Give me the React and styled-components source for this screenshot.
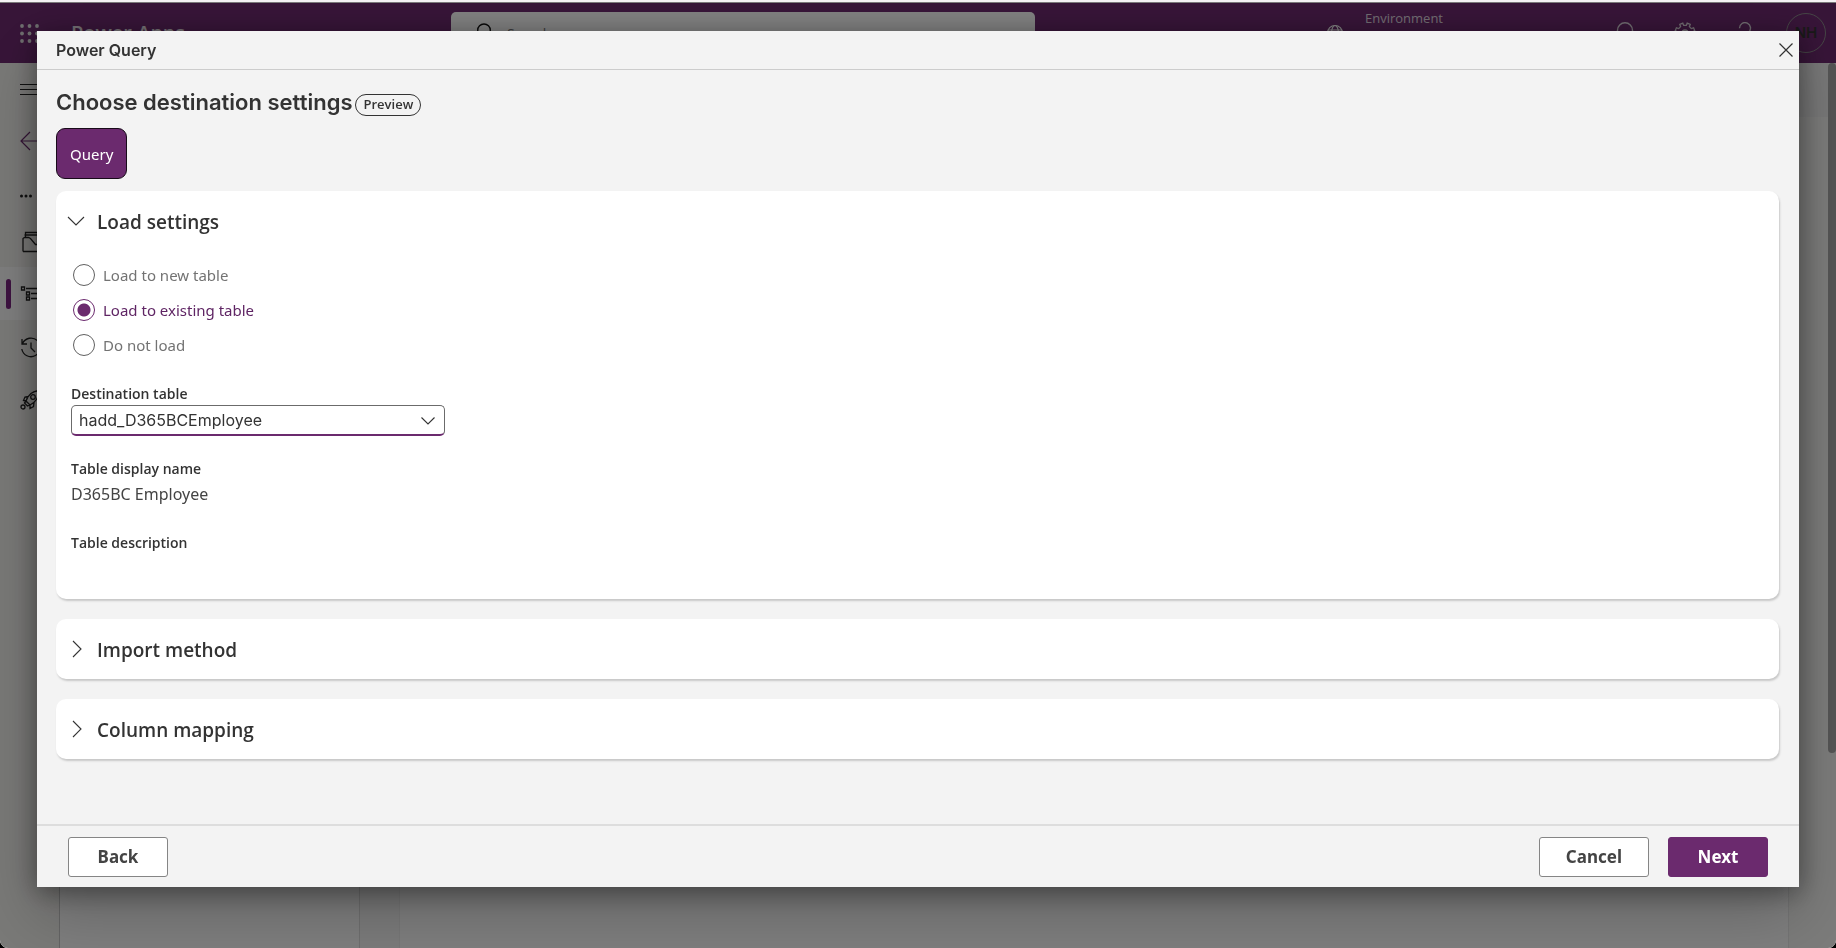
import React, { useState } from "react";
import styled, { createGlobalStyle, css } from "styled-components";

const ui = '"Open Sans", "Noto Sans", sans-serif';
const reading = '"Noto Sans", "Open Sans", sans-serif';
const system = 'Inter, "Liberation Sans", sans-serif';
const purple = "#6b2a6e";

const GlobalStyle = createGlobalStyle`
  *, *::before, *::after { box-sizing: border-box; }
  html, body { margin: 0; height: 100%; background: #000; }
  body { font-family: ${ui}; color: #333; overflow: hidden; }
  button, input, select { font: inherit; color: inherit; margin: 0; }
`;

/* ---------- application shell behind the dialog ---------- */

const Shell = styled.div`
  min-height: 100vh;
  display: flex;
  flex-direction: column;
  background: #fff;
  border-top: 3px solid #f5f2f5;
  border-radius: 0 0 8px 8px;
  overflow: hidden;
`;

const TopBar = styled.header`
  height: 60px;
  flex: none;
  display: grid;
  grid-template-columns: 451fr 584fr 801fr;
  align-items: center;
  background: #6e2a70;
  color: #fff;
`;

const BrandArea = styled.div`
  display: flex;
  align-items: center;
  gap: 32px;
  padding-left: 20px;
`;

const Brand = styled.span`
  font: 600 20px/24px ${ui};
  color: #e8e0e8;
  white-space: nowrap;
`;

const SearchBox = styled.label`
  height: 42px;
  display: flex;
  align-items: center;
  gap: 15px;
  padding: 0 21px;
  border-radius: 5px;
  background: #fff;
  color: #111;
`;

const SearchInput = styled.input`
  flex: 1;
  min-width: 0;
  padding: 0;
  border: 0;
  outline: 0;
  background: transparent;
  font-size: 14px;
  &::placeholder { color: #777; opacity: 1; }
`;

const TopTools = styled.div`
  display: flex;
  align-items: center;
  justify-content: flex-end;
  padding-right: 10px;
`;

const ToolGroup = styled.div`
  display: flex;
  gap: 36px;
  margin-right: 29px;
`;

const EnvironmentArea = styled.div`
  display: flex;
  align-items: center;
  gap: 21px;
  height: 60px;
  margin-right: 170px;
`;

const EnvironmentLabel = styled.span`
  align-self: flex-start;
  padding-top: 5px;
  font-size: 13px;
  line-height: 20px;
  color: #e0d8e0;
`;

const ToolButton = styled.button`
  width: 24px;
  height: 24px;
  padding: 0;
  border: 0;
  background: none;
  color: #e0d8e0;
  display: grid;
  place-items: center;
`;

const Avatar = styled.span`
  width: 40px;
  height: 40px;
  flex: none;
  display: grid;
  place-items: center;
  border: 1px solid #8a8a8a;
  border-radius: 50%;
  font: 600 15px/20px ${system};
  color: #333;
`;

const Workspace = styled.div`
  flex: 1;
  display: flex;
`;

const NavRail = styled.nav`
  width: 60px;
  flex: none;
  display: flex;
  flex-direction: column;
  background: #f3f2ef;
  border-right: 1px solid #c8c8c8;
`;

const NavItem = styled.a`
  height: ${(p) => (p.$compact ? 49 : 53)}px;
  padding-left: 20px;
  display: flex;
  align-items: center;
  color: ${(p) => (p.$accent ? purple : "#222")};
  ${(p) =>
    p.$selected &&
    css`
      padding-left: 6px;
      gap: 9px;
      background: #fcfcfc;
      &::before {
        content: "";
        width: 5px;
        height: 30px;
        border-radius: 3px;
        background: #7a2580;
      }
    `}
`;

const ListPane = styled.div`
  width: 300px;
  border-right: 1px solid #ddd;
  background: #fdfdfd;
`;

const Gutter = styled.div`
  width: 40px;
  background: #f6f6f6;
  border-right: 1px solid #eee;
`;

const Canvas = styled.div`
  flex: 1;
  background: #fcfcfc;
  border-right: 1px solid #e8e8e8;
`;

const SidePane = styled.div`
  width: 39px;
  background: #f6f6f4;
`;

const CommandStrip = styled.div`
  height: 54px;
  background: #efefef;
`;

const ScrollTrack = styled.div`
  width: 8px;
  background: #f6f6f4;
`;

const ScrollThumb = styled.div`
  height: 78%;
  border-radius: 4px;
  background: #a8a8a8;
`;

/* ---------- dialog ---------- */

const Overlay = styled.div`
  position: fixed;
  inset: 2px 0 0;
  display: flex;
  padding: 29px 37px 61px;
  background: rgba(0, 0, 0, 0.5);
  border-radius: 0 0 8px 8px;
`;

const Dialog = styled.section`
  flex: 1;
  min-width: 0;
  display: flex;
  flex-direction: column;
  background: #f3f3f3;
  box-shadow: 0 26px 58px rgba(0, 0, 0, 0.22), 0 5px 24px rgba(0, 0, 0, 0.4);
`;

const DialogHeader = styled.header`
  flex: none;
  height: 39px;
  display: flex;
  align-items: center;
  justify-content: space-between;
  padding: 0 4px 0 19px;
  border-bottom: 1px solid #ccc;
`;

const DialogName = styled.span`
  font: 600 16px/20px ${system};
`;

const CloseButton = styled.button`
  width: 18px;
  height: 24px;
  padding: 0;
  border: 0;
  background: none;
  display: grid;
  place-items: center;
`;

const DialogBody = styled.div`
  flex: 1;
  min-height: 0;
  overflow: auto;
  padding: 16px 20px 16px 19px;
`;

const TitleRow = styled.div`
  display: flex;
  align-items: center;
  gap: 3px;
`;

const Title = styled.h1`
  margin: 0;
  font: 600 22px/32px ${system};
`;

const Badge = styled.span`
  height: 22px;
  margin-top: 6px;
  padding: 0 7px;
  border: 1px solid #333;
  border-radius: 11px;
  font-size: 13px;
  font-weight: 600;
  line-height: 19px;
`;

const QueryTab = styled.button`
  display: block;
  height: 51px;
  margin: 10px 0 12px;
  padding: 0 13px;
  border: 1px solid #180a19;
  border-radius: 9px;
  background: ${purple};
  color: #fff;
  font: 400 15px/20px ${reading};
`;

const CardList = styled.div`
  display: flex;
  flex-direction: column;
  gap: 20px;
`;

const Card = styled.section`
  border-radius: 10px;
  background: #fff;
  box-shadow: 1px 2px 2px #c8c8c8;
`;

const CardToggle = styled.button`
  width: 100%;
  height: 60px;
  display: flex;
  align-items: center;
  gap: 12px;
  padding: 0 11px;
  border: 0;
  background: none;
  text-align: left;
`;

const CardTitle = styled.span`
  padding-top: 2px;
  font-size: 19px;
  font-weight: 600;
  line-height: 26px;
`;

const CardContent = styled.div`
  padding: 6px 15px 18px;
`;

const Options = styled.fieldset`
  margin: 0;
  padding: 0 2px;
  border: 0;
`;

const Option = styled.label`
  display: flex;
  align-items: center;
  gap: 8px;
  height: 35px;
  font: 400 15px/20px ${reading};
  color: ${(p) => (p.$checked ? "#5f2564" : "#737373")};
`;

const Radio = styled.input`
  appearance: none;
  width: 22px;
  height: 22px;
  border: 1px solid #606060;
  border-radius: 50%;
  background: #fff;
  &:checked {
    border-color: ${purple};
    background: radial-gradient(circle, ${purple} 6px, #fff 7px);
  }
`;

const Field = styled.div`
  margin-top: ${(p) => p.$gap}px;
`;

const FieldLabel = styled.label`
  display: block;
  font-size: 14px;
  font-weight: 600;
  line-height: 20px;
`;

const SelectFrame = styled.div`
  width: 374px;
  max-width: 100%;
  margin-top: 1px;
  display: grid;
  align-items: center;
  > * { grid-area: 1 / 1; }
  > svg { justify-self: end; margin-right: 10px; pointer-events: none; }
`;

const Select = styled.select`
  appearance: none;
  width: 100%;
  height: 31px;
  padding: 0 32px 0 7px;
  border: 1px solid #6b6b6b;
  border-bottom: 2px solid ${purple};
  border-radius: 5px;
  background: #fff;
  font: 400 16px/20px ${system};
`;

const FieldValue = styled.div`
  min-height: 24px;
  margin-top: 4px;
  font: 400 16px/22px ${reading};
  color: #444;
`;

const DialogFooter = styled.footer`
  flex: none;
  height: 63px;
  display: flex;
  align-items: center;
  gap: 19px;
  padding: 0 31px;
  border-top: 2px solid #ddd;
`;

const Spacer = styled.div`
  flex: 1;
`;

const FooterButton = styled.button`
  height: 40px;
  min-width: 100px;
  padding: 0 26px;
  border: 1px solid ${(p) => (p.$primary ? purple : "#858585")};
  border-radius: 3px;
  background: ${(p) => (p.$primary ? purple : "#fff")};
  color: ${(p) => (p.$primary ? "#fff" : "#444")};
  font: 700 17px/24px ${reading};
`;

/* ---------- icons ---------- */

const Line = ({ w = 20, h = 20, width = 1, children }) => (
  <svg width={w} height={h} viewBox={`0 0 ${w} ${h}`} fill="none" stroke="currentColor" strokeWidth={width} aria-hidden="true">
    {children}
  </svg>
);

const Waffle = () => (
  <svg width="19" height="19" viewBox="0 0 19 19" fill="#ddd" aria-hidden="true">
    {[2, 9.5, 17].map((y) => [2, 9.5, 17].map((x) => <circle key={`${x}-${y}`} cx={x} cy={y} r="1.9" />))}
  </svg>
);
const Chevron = ({ open }) => (
  <Line w={18} h={18} width={1.1}>
    <path d={open ? "M1 5l8 8 8-8" : "M6 1l8 8-8 8"} />
  </Line>
);
const SelectChevron = () => (
  <Line w={14} h={10} width={1.1}><path d="M0.5 1.5L7 8l6.5-6.5" /></Line>
);
const Cross = () => (
  <Line w={14} h={14} width={1.2}><path d="M0.5 0.5l13 13M13.5 0.5l-13 13" /></Line>
);
const Magnifier = () => (
  <Line width={1.4}><circle cx="12" cy="7.3" r="6.3" /><path d="M7.5 12L1 18.5" /></Line>
);
const Globe = () => (
  <Line w={18} h={18} width={1.2}>
    <circle cx="9" cy="9" r="7.5" /><ellipse cx="9" cy="9" rx="3.5" ry="7.5" /><path d="M2 6h14M2 12h14" />
  </Line>
);
const Bell = () => (
  <Line w={22} h={22} width={1.4}><path d="M3.5 16V8.3a7.5 7.5 0 0 1 15 0V16l1 2h-17zM9 18a2 2 0 0 0 4 0" /></Line>
);
const Gear = () => (
  <Line w={22} h={22} width={1.3}>
    <circle cx="11" cy="11" r="3" />
    <path d="M8.8 1.2l.9 2.2h2.6l.9-2.2 3 1.2-.8 2.3 1.9 1.9 2.3-.8 1.2 3-2.2.9v2.6l2.2.9-1.2 3-2.3-.8-1.9 1.9.8 2.3-3 1.2-.9-2.2H9.7l-.9 2.2-3-1.2.8-2.3-1.9-1.9-2.3.8-1.2-3 2.2-.9V9.700l-2.200-.9 1.200-3 2.300.8 1.900-1.900-.8-2.300z" />
  </Line>
);
const Question = () => (
  <Line w={22} h={22} width={1.4}><path d="M5.5 6.2a5.5 5.5 0 1 1 9 4.2c-2 1.6-3.5 2.3-3.5 4.6M11 18v2" /></Line>
);
const Menu = () => (
  <Line width={1.2}><path d="M0 4.5h20M0 9.5h20M0 14.5h20" /></Line>
);
const BackArrow = () => (
  <Line width={1.2}><path d="M10 1L1 10l9 9M1 10h19" /></Line>
);
const Dots = () => (
  <svg width="20" height="12" viewBox="0 0 20 12" fill="currentColor" aria-hidden="true">
    <circle cx="1.5" cy="10" r="1.5" /><circle cx="6" cy="10" r="1.5" /><circle cx="10.5" cy="10" r="1.5" />
  </svg>
);
const Box = () => (
  <Line w={24} h={24} width={1.3}>
    <path d="M3 20.500V7.500l1.500-1h4l2 1 5 6h5M5.500 6.500V1.500h12v12M4.500 4h13M3 20.500h19" />
  </Line>
);
const ListTree = () => (
  <Line width={1.3}>
    <path d="M1.5 3h3v3h-3zM6.5 8h3v3h-3zM6.5 13h3v3h-3zM6 4.5h14M11 9.5h9M11 14.5h9" />
  </Line>
);
const History = () => (
  <Line w={22} h={22} width={1.3}>
    <path d="M2 3v5h5M2.500 7.500A9.300 9.300 0 1 1 1.800 13M11 6.500V12l4 4" />
  </Line>
);
const Rocket = () => (
  <Line width={1.3}>
    <circle cx="3" cy="17" r="2" />
    <path d="M6 11c2-6 6-10 13-10.500 0 7.500-3 11.500-9 14.500zM8.500 6.500L5 7 3.500 10.500 6.500 11M6 11l-1.500 2 3 3L10 15M10 15v3.500l3.500-2 .5-4" />
    <circle cx="13" cy="7" r="2.3" />
  </Line>
);

/* ---------- page ---------- */

const loadOptions = ["Load to new table", "Load to existing table", "Do not load"];

function CollapsibleCard({ title, initiallyOpen = false, children }) {
  const [open, setOpen] = useState(initiallyOpen);
  return (
    <Card>
      <CardToggle type="button" aria-expanded={open} onClick={() => setOpen(!open)}>
        <Chevron open={open} />
        <CardTitle>{title}</CardTitle>
      </CardToggle>
      {open && children}
    </Card>
  );
}

function AppShell() {
  return (
    <Shell>
      <TopBar>
        <BrandArea>
          <Waffle />
          <Brand>Power Apps</Brand>
        </BrandArea>
        <SearchBox>
          <Magnifier />
          <SearchInput type="search" aria-label="Search" placeholder="Search" />
        </SearchBox>
        <TopTools>
          <EnvironmentArea>
            <Globe />
            <EnvironmentLabel>Environment</EnvironmentLabel>
          </EnvironmentArea>
          <ToolGroup>
            <ToolButton type="button" aria-label="Notifications"><Bell /></ToolButton>
            <ToolButton type="button" aria-label="Settings"><Gear /></ToolButton>
            <ToolButton type="button" aria-label="Help"><Question /></ToolButton>
          </ToolGroup>
          <Avatar>NH</Avatar>
        </TopTools>
      </TopBar>
      <Workspace>
        <NavRail>
          <NavItem href="#menu" aria-label="Menu"><Menu /></NavItem>
          <NavItem href="#back" aria-label="Back" $accent $compact><BackArrow /></NavItem>
          <NavItem href="#more" aria-label="More"><Dots /></NavItem>
          <NavItem href="#solutions" aria-label="Solutions" $compact><Box /></NavItem>
          <NavItem href="#objects" aria-label="Objects" $selected><ListTree /></NavItem>
          <NavItem href="#history" aria-label="History"><History /></NavItem>
          <NavItem href="#pipelines" aria-label="Pipelines"><Rocket /></NavItem>
        </NavRail>
        <ListPane />
        <Gutter />
        <Canvas />
        <SidePane><CommandStrip /></SidePane>
        <ScrollTrack><ScrollThumb /></ScrollTrack>
      </Workspace>
    </Shell>
  );
}

export default function App() {
  const [choice, setChoice] = useState(loadOptions[1]);
  return (
    <>
      <GlobalStyle />
      <AppShell />
      <Overlay>
        <Dialog role="dialog" aria-modal="true" aria-labelledby="dialog-name">
          <DialogHeader>
            <DialogName id="dialog-name">Power Query</DialogName>
            <CloseButton type="button" aria-label="Close"><Cross /></CloseButton>
          </DialogHeader>
          <DialogBody>
            <TitleRow>
              <Title>Choose destination settings</Title>
              <Badge>Preview</Badge>
            </TitleRow>
            <QueryTab type="button">Query</QueryTab>
            <CardList>
              <CollapsibleCard title="Load settings" initiallyOpen>
                <CardContent>
                  <Options aria-label="Load settings">
                    {loadOptions.map((name) => (
                      <Option key={name} $checked={choice === name}>
                        <Radio type="radio" name="load" checked={choice === name} onChange={() => setChoice(name)} />
                        {name}
                      </Option>
                    ))}
                  </Options>
                  <Field $gap={22}>
                    <FieldLabel htmlFor="destination">Destination table</FieldLabel>
                    <SelectFrame>
                      <Select id="destination" defaultValue="hadd_D365BCEmployee">
                        <option>hadd_D365BCEmployee</option>
                      </Select>
                      <SelectChevron />
                    </SelectFrame>
                  </Field>
                  <Field $gap={23}>
                    <FieldLabel as="div">Table display name</FieldLabel>
                    <FieldValue>D365BC Employee</FieldValue>
                  </Field>
                  <Field $gap={26}>
                    <FieldLabel as="div">Table description</FieldLabel>
                    <FieldValue />
                  </Field>
                </CardContent>
              </CollapsibleCard>
              <CollapsibleCard title="Import method" />
              <CollapsibleCard title="Column mapping" />
            </CardList>
          </DialogBody>
          <DialogFooter>
            <FooterButton type="button">Back</FooterButton>
            <Spacer />
            <FooterButton type="button">Cancel</FooterButton>
            <FooterButton type="button" $primary>Next</FooterButton>
          </DialogFooter>
        </Dialog>
      </Overlay>
    </>
  );
}
